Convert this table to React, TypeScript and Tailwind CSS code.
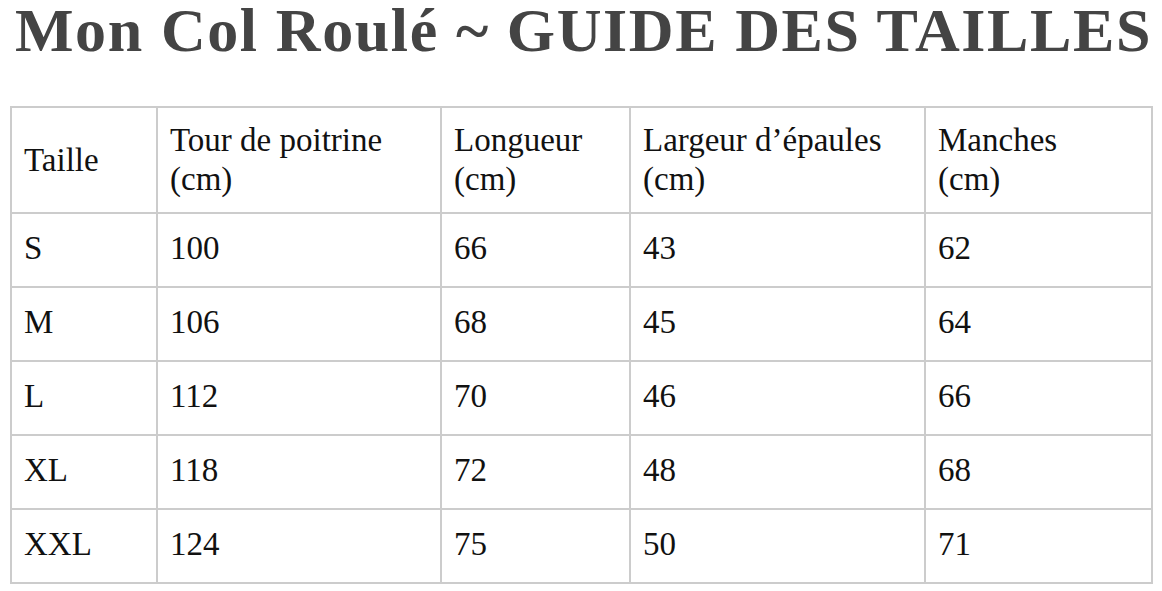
const headers = [
  ['Taille'],
  ['Tour de poitrine', '(cm)'],
  ['Longueur', '(cm)'],
  ['Largeur d’épaules', '(cm)'],
  ['Manches', '(cm)'],
];

const rows = [
  ['S', '100', '66', '43', '62'],
  ['M', '106', '68', '45', '64'],
  ['L', '112', '70', '46', '66'],
  ['XL', '118', '72', '48', '68'],
  ['XXL', '124', '75', '50', '71'],
];

const widths = ['w-[146px]', 'w-[284px]', 'w-[189px]', 'w-[295px]', 'w-[227px]'];

export default function App() {
  return (
    <div className="w-[1162px] h-[591px] bg-white overflow-hidden font-['Liberation_Serif',serif]">
      <h1 className="pl-[15px] text-[62px] leading-[60px] tracking-[1.6px] font-bold text-[#444] whitespace-nowrap">
        Mon Col Roulé ~ GUIDE DES TAILLES
      </h1>
      <table className="ml-[10px] mt-[46px] border-collapse border-2 border-[#ccc] text-[33px] leading-[39px] text-[#111]">
        <thead>
          <tr className="h-[106px]">
            {headers.map((h, i) => (
              <th key={i} className={`${widths[i]} border-2 border-[#ccc] px-3 text-left font-normal align-middle`}>
                {h.map((line) => (
                  <div key={line} className="whitespace-nowrap">{line}</div>
                ))}
              </th>
            ))}
          </tr>
        </thead>
        <tbody>
          {rows.map((r) => (
            <tr key={r[0]} className="h-[74px]">
              {r.map((c, i) => (
                <td key={i} className={`${widths[i]} border-2 border-[#ccc] px-3 pb-1 align-middle`}>
                  {c}
                </td>
              ))}
            </tr>
          ))}
        </tbody>
      </table>
    </div>
  );
}
